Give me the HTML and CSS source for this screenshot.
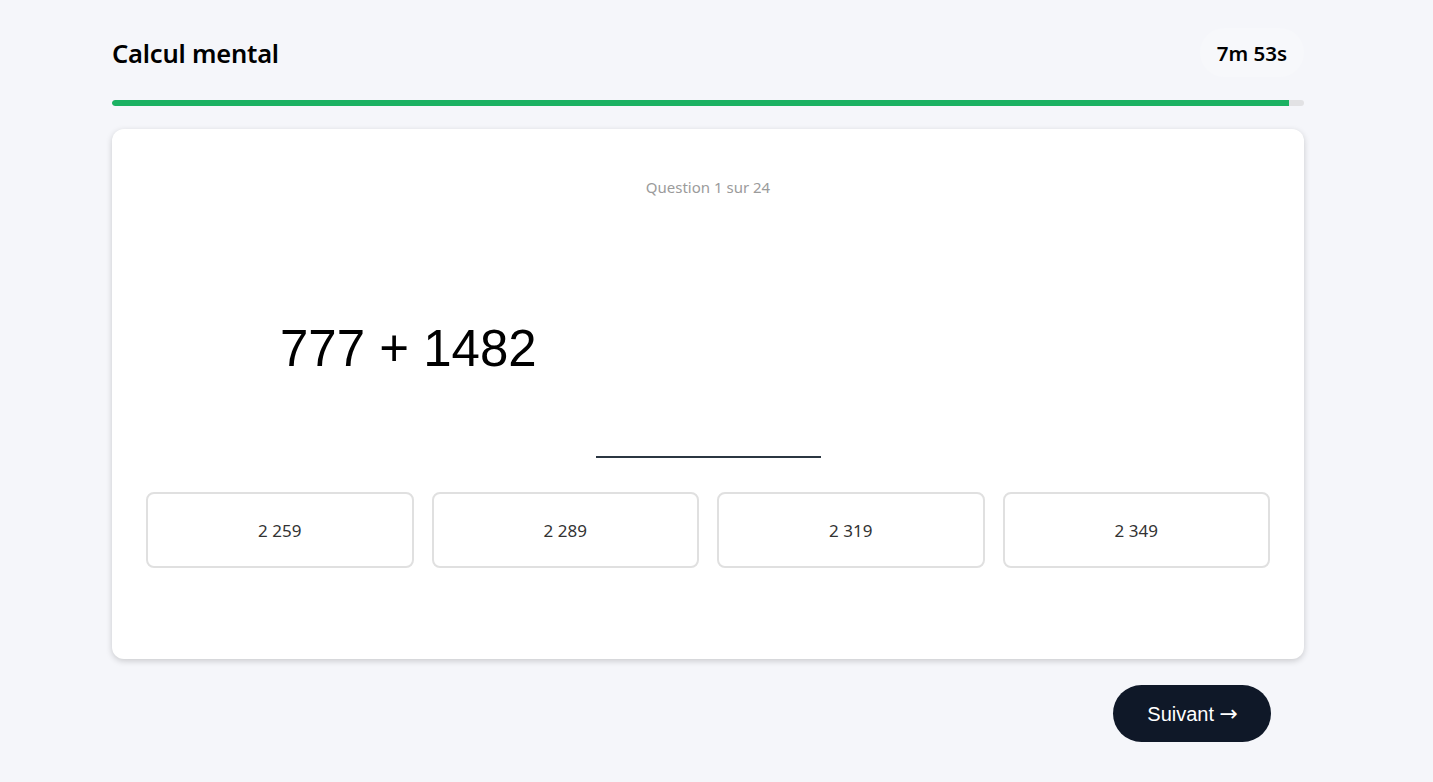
FILE: index.html
```html
<!DOCTYPE html>
<html lang="fr">
<head>
<meta charset="utf-8">
<title>Calcul mental</title>
<link rel="stylesheet" href="styles.css">
</head>
<body>
<div class="page">
  <header class="header">
    <h1 class="title">Calcul mental</h1>
    <div class="timer">7m 53s</div>
  </header>
  <div class="progress"><div class="progress-fill" style="width: 98.7%"></div></div>
  <main class="card">
    <div class="q-label">Question 1 sur 24</div>
    <div class="expression">777 + 1482</div>
    <div class="blank"></div>
    <div class="options">
      <button class="option">2 259</button>
      <button class="option">2 289</button>
      <button class="option">2 319</button>
      <button class="option">2 349</button>
    </div>
  </main>
  <div class="footer">
    <button class="next">Suivant <span class="arrow">→</span></button>
  </div>
</div>
</body>
</html>
```
FILE: styles.css
```css
* { box-sizing: border-box; }
html, body { margin: 0; padding: 0; }
body {
  background: #f5f6fa;
  font-family: "Noto Sans", "Open Sans", sans-serif;
  color: #111;
  height: 782px;
  overflow: hidden;
}
.page {
  width: 1192px;
  margin-left: 112px;
  padding-top: 28px;
}
.header {
  display: flex;
  align-items: center;
  justify-content: space-between;
  height: 49px;
}
.title {
  margin: 0;
  font-size: 25.5px;
  font-weight: 600;
  color: #000;
  letter-spacing: -0.2px;
}
.timer {
  height: 49px;
  display: flex;
  align-items: center;
  padding: 0 17px;
  border-radius: 25px;
  background: #f7f8fb;
  font-size: 20.5px;
  font-weight: 600;
  color: #000;
}
.progress {
  margin-top: 23px;
  height: 6px;
  border-radius: 3px;
  background: #e2e2e4;
  overflow: hidden;
}
.progress-fill {
  height: 100%;
  background: #1bb162;
  border-radius: 3px 0 0 3px;
}
.card {
  margin-top: 23px;
  background: #fff;
  border-radius: 12px;
  box-shadow: 0 2px 6px rgba(0, 0, 0, 0.18);
  padding: 48px 34px 91px;
  display: flex;
  flex-direction: column;
}
.q-label {
  text-align: center;
  font-size: 15px;
  line-height: 20px;
  color: #9b9b9b;
}
.expression {
  margin-top: 123px;
  margin-left: 134px;
  font-family: "Liberation Sans", Arial, sans-serif;
  font-size: 51px;
  line-height: 57px;
  color: #000;
}
.blank {
  align-self: center;
  width: 225px;
  margin-top: 79px;
  border-bottom: 2px solid #2b3641;
}
.options {
  margin-top: 34px;
  display: grid;
  grid-template-columns: repeat(4, 1fr);
  gap: 18px;
}
.option {
  height: 76px;
  background: #fff;
  border: 2px solid #e0e0e0;
  border-radius: 8px;
  font-family: "Noto Sans", "Open Sans", sans-serif;
  font-size: 17px;
  color: #333;
  cursor: pointer;
}
.footer {
  display: flex;
  justify-content: flex-end;
  padding-right: 33px;
  margin-top: 26px;
}
.next {
  height: 57px;
  padding: 0 33px 0 34px;
  border: none;
  border-radius: 29px;
  background: #0f1828;
  color: #fff;
  font-family: "Liberation Sans", Arial, sans-serif;
  font-size: 20px;
  cursor: pointer;
}
.arrow {
  font-family: "DejaVu Sans", sans-serif;
  font-size: 22px;
}
```
